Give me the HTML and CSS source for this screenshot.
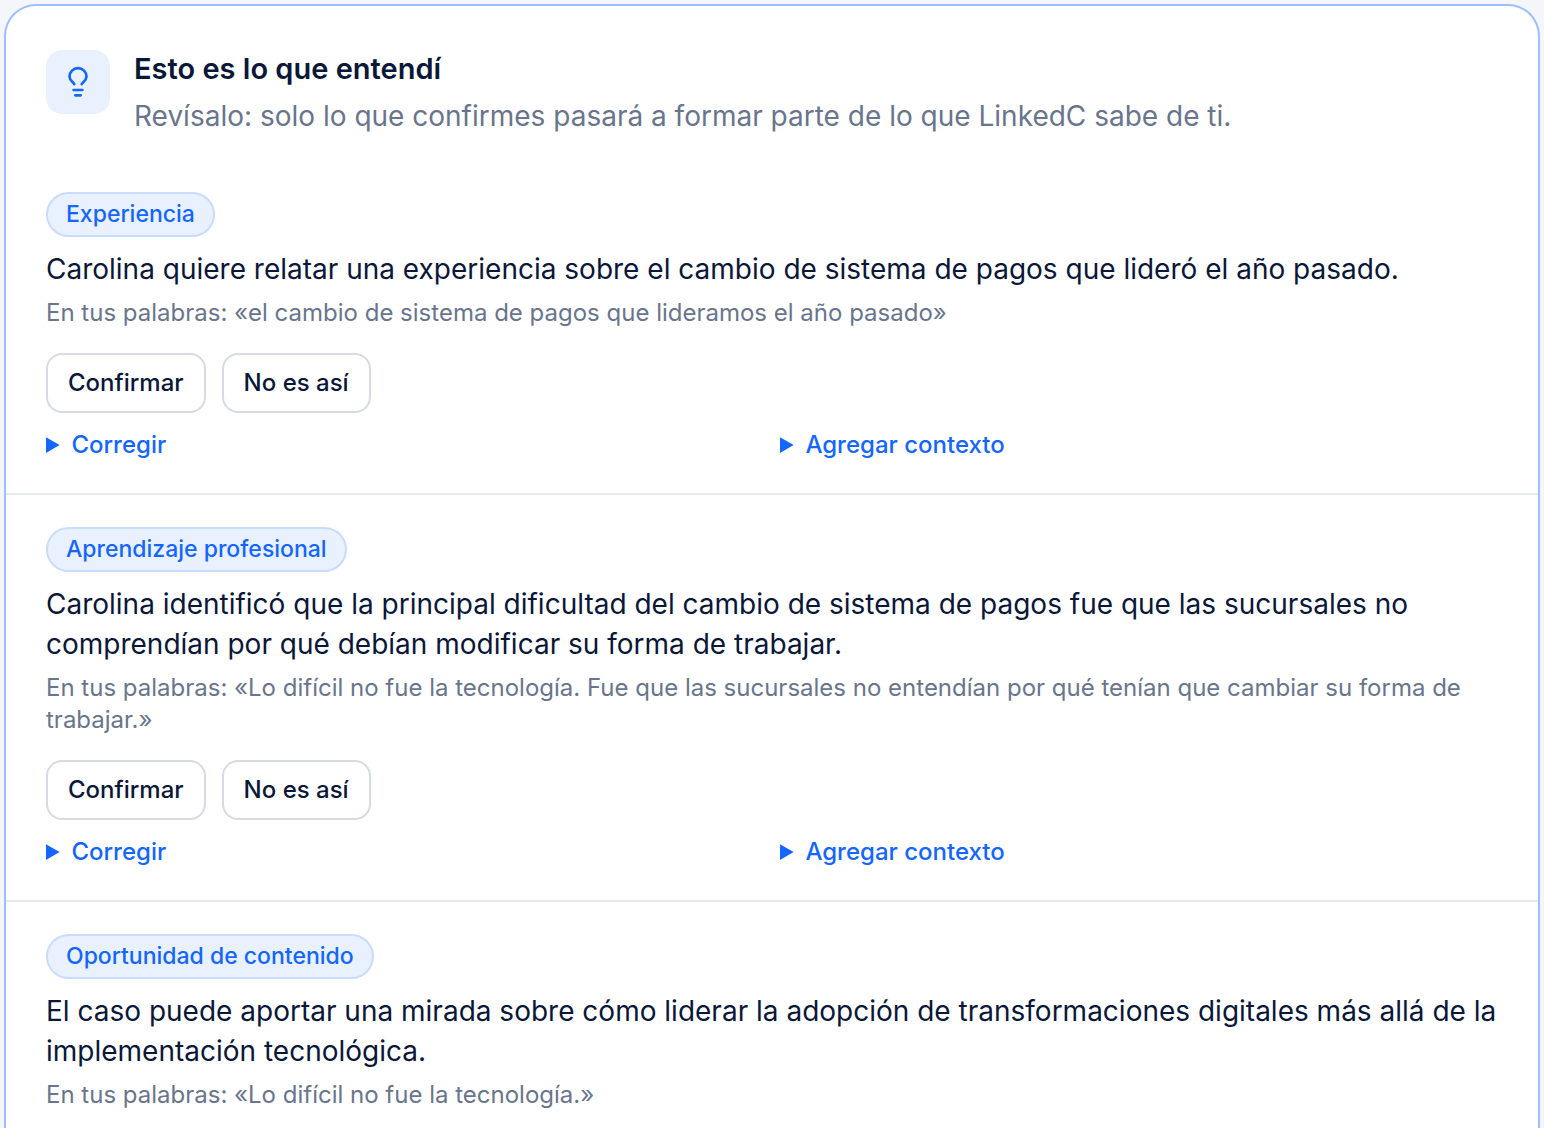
FILE: index.html
```
<!DOCTYPE html>
<html lang="es">
<head>
	<meta charset="UTF-8">
	<title>LinkedC</title>
	<meta name="viewport" content="width=device-width,initial-scale=1">
	<link rel="stylesheet" href="styles.css">
</head>
<body>
	<main class="card">
		<header class="card-header">
			<div class="card-icon">
				<svg viewBox="0 0 32 32" width="32" height="32" aria-hidden="true">
					<path d="M12.3 18.2C11.8 16.4 7.5 15 7.5 10.6a8.5 8.5 0 0 1 17 0C24.5 15 20.2 16.4 19.7 18.2M11.6 24h8.8M13.3 29.3h5.4"/>
				</svg>
			</div>
			<div class="card-heading">
				<h1>Esto es lo que entendí</h1>
				<p>Revísalo: solo lo que confirmes pasará a formar parte de lo que LinkedC sabe de ti.</p>
			</div>
		</header>
		<section class="item">
			<span class="chip">Experiencia</span>
			<p class="statement">Carolina quiere relatar una experiencia sobre el cambio de sistema de pagos que lideró el año pasado.</p>
			<p class="quote">En tus palabras: «el cambio de sistema de pagos que lideramos el año pasado»</p>
			<div class="actions">
				<button type="button">Confirmar</button>
				<button type="button">No es así</button>
			</div>
			<div class="more">
				<details><summary>Corregir</summary></details>
				<details><summary>Agregar contexto</summary></details>
			</div>
		</section>
		<section class="item">
			<span class="chip">Aprendizaje profesional</span>
			<p class="statement">Carolina identificó que la principal dificultad del cambio de sistema de pagos fue que las sucursales no comprendían por qué debían modificar su forma de trabajar.</p>
			<p class="quote">En tus palabras: «Lo difícil no fue la tecnología. Fue que las sucursales no entendían por qué tenían que cambiar su forma de trabajar.»</p>
			<div class="actions">
				<button type="button">Confirmar</button>
				<button type="button">No es así</button>
			</div>
			<div class="more">
				<details><summary>Corregir</summary></details>
				<details><summary>Agregar contexto</summary></details>
			</div>
		</section>
		<section class="item">
			<span class="chip">Oportunidad de contenido</span>
			<p class="statement">El caso puede aportar una mirada sobre cómo liderar la adopción de transformaciones digitales más allá de la implementación tecnológica.</p>
			<p class="quote">En tus palabras: «Lo difícil no fue la tecnología.»</p>
		</section>
	</main>
</body>
</html>
```
FILE: styles.css
```
* {
	box-sizing: border-box;
}
body {
	margin: 0;
	padding: 4px 4px 0;
	background: #f4f6fa;
	color: #0a1738;
	font-family: Inter, "Liberation Sans", sans-serif;
	font-size: 28px;
	line-height: 40px;
}
h1,
p {
	margin: 0;
}
.card {
	border: 2px solid #9dbeff;
	border-bottom: 0;
	border-radius: 32px 32px 0 0;
	background: #fff;
}
.card-header {
	display: flex;
	gap: 24px;
	padding: 40px 40px 24px;
}
.card-icon {
	display: flex;
	flex: none;
	align-items: center;
	justify-content: center;
	width: 64px;
	height: 64px;
	margin-top: 4px;
	border-radius: 16px;
	background: #e9f1ff;
}
.card-icon svg {
	fill: none;
	stroke: #1466ff;
	stroke-width: 2.7;
	stroke-linecap: round;
}
.card-heading h1 {
	font-size: 29px;
	font-weight: 600;
	line-height: 46px;
}
.card-heading p {
	margin-top: 4px;
	color: #69758c;
}
.item {
	padding: 32px 40px;
}
.item + .item {
	border-top: 2px solid #e6eaef;
}
.chip {
	display: block;
	width: fit-content;
	height: 45px;
	padding: 0 18px;
	border: 2px solid #c9dcff;
	border-radius: 24px;
	background: #e9f1ff;
	color: #1466ff;
	font-size: 23px;
	font-weight: 500;
	line-height: 41px;
}
.statement {
	margin-top: 12px;
}
.quote {
	margin-top: 8px;
	color: #69758c;
	font-size: 24px;
	line-height: 32px;
}
.actions {
	display: flex;
	gap: 16px;
	margin-top: 24px;
}
.actions button {
	height: 60px;
	padding: 0 20px 2px;
	border: 2px solid #d6dae5;
	border-radius: 16px;
	background: #fff;
	color: #0a1738;
	font: 500 24px Inter, "Liberation Sans", sans-serif;
}
.more {
	display: grid;
	grid-template-columns: 1fr 1fr;
	gap: 16px;
	margin-top: 16px;
}
.more summary {
	color: #1466ff;
	font-size: 24px;
	font-weight: 500;
	line-height: 32px;
	cursor: pointer;
}
```
